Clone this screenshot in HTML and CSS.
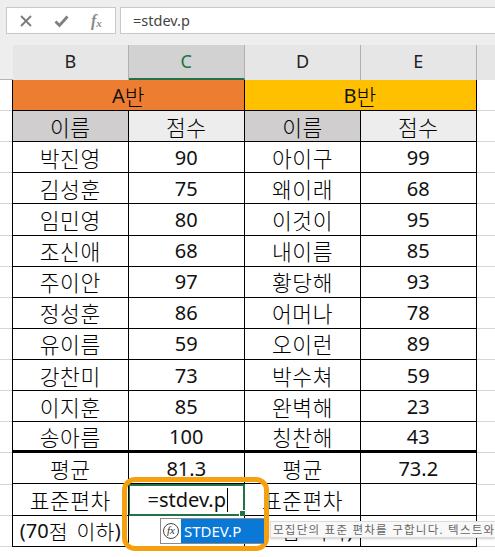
FILE: index.html
```html
<!DOCTYPE html>
<html lang="ko">
<head>
  <meta charset="UTF-8" />
  <title>stdev.p</title>
  <link rel="stylesheet" href="styles.css">
</head>
<body>
  <div class="formula-bar">
    <div class="fx-box">
      <svg class="tool-icon" width="14" height="14" viewBox="0 0 14 14"><path d="M2 2 L12 12 M12 2 L2 12" stroke="#7a7a7a" stroke-width="1.8" fill="none"/></svg>
      <svg class="tool-icon" width="15" height="14" viewBox="0 0 15 14"><path d="M1.5 7.5 L5.5 11.5 L13.5 2.5" stroke="#7f7f7f" stroke-width="2.8" fill="none"/></svg>
      <span class="fx-label">f<sub>x</sub></span>
    </div>
    <div class="formula-input">=stdev.p</div>
  </div>

  <div class="col-heads">
    <div class="col-head">B</div>
    <div class="col-head selected">C</div>
    <div class="col-head">D</div>
    <div class="col-head">E</div>
    <div class="col-rest"></div>
  </div>

  <div class="sheet">
    <div class="grid">
      <div class="cell span2 orange">A<span class="ko">반</span></div>
      <div class="cell span2 yellow">B<span class="ko">반</span></div>

      <div class="cell dark ko">이름</div><div class="cell light ko">점수</div><div class="cell dark ko">이름</div><div class="cell light ko">점수</div>

      <div class="cell ko">박진영</div><div class="cell">90</div><div class="cell ko">아이구</div><div class="cell">99</div>
      <div class="cell ko">김성훈</div><div class="cell">75</div><div class="cell ko">왜이래</div><div class="cell">68</div>
      <div class="cell ko">임민영</div><div class="cell">80</div><div class="cell ko">이것이</div><div class="cell">95</div>
      <div class="cell ko">조신애</div><div class="cell">68</div><div class="cell ko">내이름</div><div class="cell">85</div>
      <div class="cell ko">주이안</div><div class="cell">97</div><div class="cell ko">황당해</div><div class="cell">93</div>
      <div class="cell ko">정성훈</div><div class="cell">86</div><div class="cell ko">어머나</div><div class="cell">78</div>
      <div class="cell ko">유이름</div><div class="cell">59</div><div class="cell ko">오이런</div><div class="cell">89</div>
      <div class="cell ko">강찬미</div><div class="cell">73</div><div class="cell ko">박수쳐</div><div class="cell">59</div>
      <div class="cell ko">이지훈</div><div class="cell">85</div><div class="cell ko">완벽해</div><div class="cell">23</div>
      <div class="cell thick ko">송아름</div><div class="cell thick">100</div><div class="cell thick ko">칭찬해</div><div class="cell thick">43</div>

      <div class="cell ko">평균</div><div class="cell">81.3</div><div class="cell ko">평균</div><div class="cell">73.2</div>
      <div class="cell ko">표준편차</div><div class="cell editing">=stdev.p<span class="caret"></span><span class="fill-handle"></span></div><div class="cell ko">표준편차</div><div class="cell"></div>
      <div class="cell note">(70<span class="ko">점 이하</span>)</div><div class="cell"></div><div class="cell note">(70<span class="ko">점 이하</span>)</div><div class="cell"></div>
    </div>

    <!-- overlays -->
    <div class="ring"></div>
    <div class="suggest">
      <span class="suggest-icon"><i>fx</i></span>
      <span class="suggest-name">STDEV.P</span>
    </div>
    <div class="tip">모집단의 표준 편차를 구합니다. 텍스트와</div>
  </div>
</body>
</html>
```

FILE: styles.css
```css
body {
  margin: 0;
  width: 495px;
  height: 557px;
  overflow: hidden;
  background-color: #fff;
  font-family: "Noto Sans", "Noto Sans CJK KR", sans-serif;
  color: #111;
}

.formula-bar {
  display: flex;
  gap: 4px;
  height: 45px;
  padding: 7px 0 11px 6px;
  box-sizing: border-box;
  background-color: #eeeeee;
}

.fx-box {
  width: 110px;
  display: flex;
  align-items: center;
  box-sizing: border-box;
  padding-left: 12px;
  gap: 21px;
  background-color: #fff;
  border: 1px solid #c8c8c8;
}

.fx-label {
  font-family: "Liberation Serif", serif;
  font-style: italic;
  font-weight: bold;
  font-size: 16px;
  color: #8a8a8a;
  margin-left: 1px;
}

.fx-label sub {
  font-size: 11px;
  vertical-align: -1px;
  line-height: 0;
}

.formula-input {
  flex: 1;
  background-color: #fff;
  border: 1px solid #c8c8c8;
  border-right: none;
  padding-left: 12px;
  font-size: 14.5px;
  line-height: 25px;
  color: #444;
}

.col-heads {
  display: grid;
  grid-template-columns: 115.5px 116.5px 116px 115.5px 1fr;
  height: 35px;
  padding-left: 13px;
  box-sizing: border-box;
  background-color: #eeeeee;
  border-bottom: 1px solid #b5b5b5;
}

.col-head {
  background-color: #e6e6e6;
  border-right: 1px solid #b0b0b0;
  text-align: center;
  font-size: 18px;
  line-height: 33px;
  color: #222;
}

.col-head.selected {
  background-color: #d2d2d2;
  color: #217346;
  border-bottom: 2px solid #217346;
}

.col-rest {
  background-color: #e6e6e6;
}

.sheet {
  position: relative;
  height: 477px;
  background-image: repeating-linear-gradient(to bottom, transparent 0, transparent 30.12px, #d6d6d6 30.12px, #d6d6d6 31.12px);
}

.grid {
  display: grid;
  grid-template-columns: 115.5px 116.5px 116px 115.5px;
  grid-auto-rows: 31.12px;
  width: 464px;
  margin-left: 12px;
  border-left: 1px solid #000;
}

.cell {
  position: relative;
  display: flex;
  align-items: center;
  justify-content: center;
  box-sizing: border-box;
  border-right: 1px solid #000;
  border-bottom: 1px solid #000;
  background-color: #fff;
  font-size: 20px;
  white-space: pre;
  overflow: hidden;
}

.ko {
  font-size: 21.5px;
  font-weight: 300;
  letter-spacing: 0.5px;
  color: #000;
}

.note {
  letter-spacing: 0;
}

.note .ko {
  font-size: 20.5px;
  letter-spacing: 0.3px;
  word-spacing: 3px;
}

.span2 { grid-column: span 2; }
.orange { background-color: #ed7d31; }
.yellow { background-color: #ffc000; }
.dark { background-color: #d0cece; }
.light { background-color: #ededed; }
.thick { border-bottom: 3px solid #000; }

.editing {
  justify-content: flex-end;
  padding-right: 15px;
  border: 2px solid #217346;
  border-left-width: 1px;
  overflow: visible;
}

.caret {
  width: 1px;
  height: 24px;
  margin-left: 1px;
  background-color: #000;
}

.fill-handle {
  position: absolute;
  right: -3px;
  bottom: -3px;
  width: 5px;
  height: 5px;
  background-color: #217346;
  border: 1px solid #fff;
}

.ring {
  position: absolute;
  left: 122px;
  top: 397px;
  width: 147px;
  height: 74px;
  box-sizing: border-box;
  border: 5px solid #f5a10f;
  border-radius: 13px;
}

.suggest {
  position: absolute;
  left: 160px;
  top: 438px;
  display: flex;
  width: 104px;
  height: 26px;
  box-sizing: border-box;
  border: 1px solid #8a8a8a;
  border-right: none;
  background-color: #fff;
}

.suggest-icon {
  width: 20px;
  display: flex;
  align-items: center;
  justify-content: center;
  background-color: #fff;
}

.suggest-icon i {
  width: 14px;
  height: 14px;
  border: 1.5px solid #444;
  border-radius: 50%;
  font-family: "Liberation Serif", serif;
  font-size: 11px;
  line-height: 13px;
  text-align: center;
  color: #333;
}

.suggest-name {
  flex: 1;
  padding-left: 3px;
  background-color: #0a78d7;
  color: #fff;
  font-size: 15px;
  line-height: 24px;
}

.tip {
  position: absolute;
  left: 270px;
  top: 441px;
  width: 225px;
  height: 17px;
  box-sizing: border-box;
  padding-left: 2px;
  background-color: #f8f8f8;
  border: 1px solid #dcdcdc;
  border-right: none;
  box-shadow: 0 1px 2px rgba(0, 0, 0, 0.2);
  font-size: 11.5px;
  line-height: 15px;
  letter-spacing: 1.25px;
  color: #666;
  white-space: nowrap;
  overflow: hidden;
}
```
